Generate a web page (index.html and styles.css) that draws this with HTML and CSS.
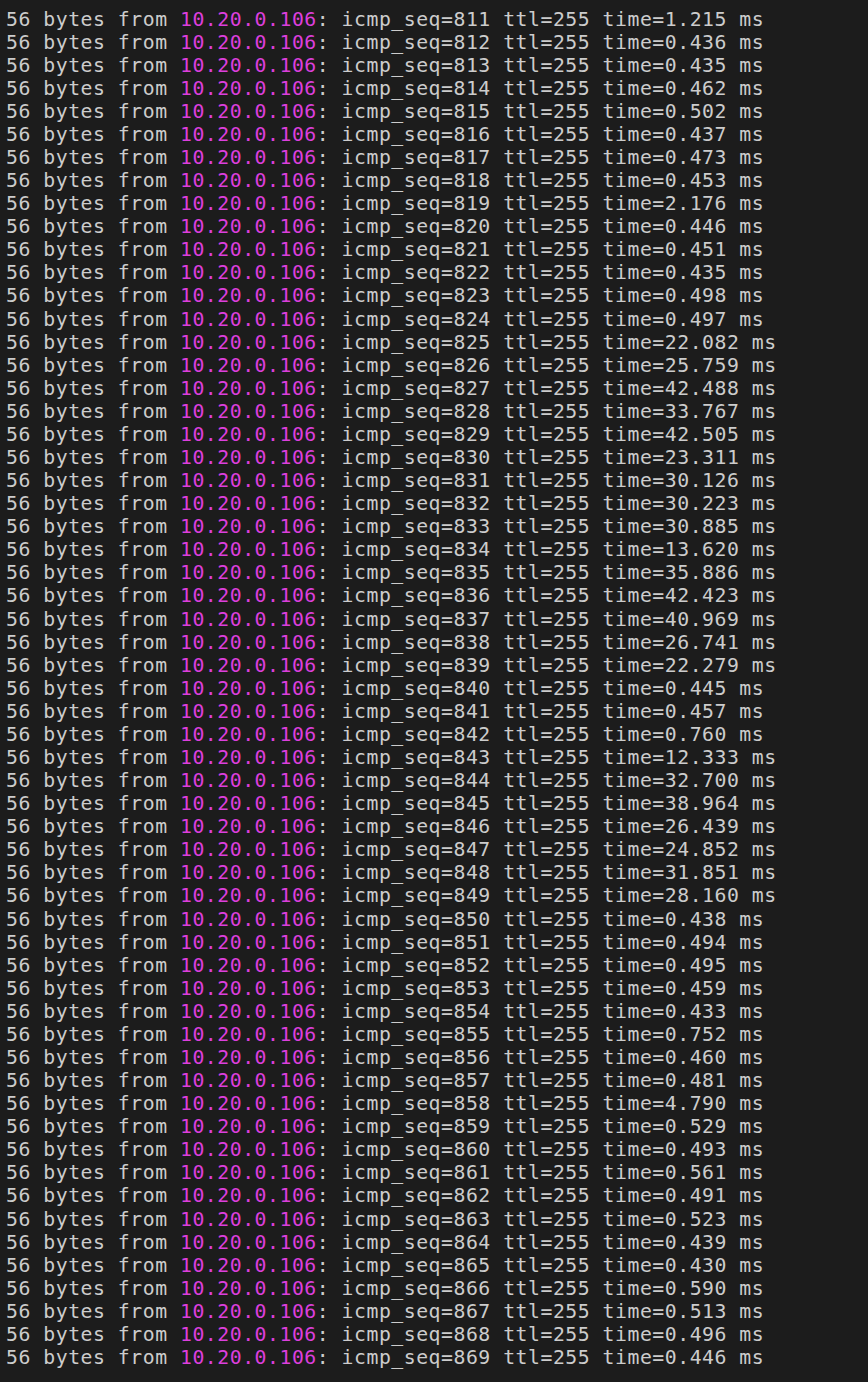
FILE: index.html
```html
<!DOCTYPE html>
<html>
<head>
<meta charset="utf-8">
<link rel="stylesheet" href="styles.css">
</head>
<body>
<div class="term">
<div class="line">56 bytes from <span class="ip">10.20.0.106</span>: icmp_seq=811 ttl=255 time=1.215 ms</div>
<div class="line">56 bytes from <span class="ip">10.20.0.106</span>: icmp_seq=812 ttl=255 time=0.436 ms</div>
<div class="line">56 bytes from <span class="ip">10.20.0.106</span>: icmp_seq=813 ttl=255 time=0.435 ms</div>
<div class="line">56 bytes from <span class="ip">10.20.0.106</span>: icmp_seq=814 ttl=255 time=0.462 ms</div>
<div class="line">56 bytes from <span class="ip">10.20.0.106</span>: icmp_seq=815 ttl=255 time=0.502 ms</div>
<div class="line">56 bytes from <span class="ip">10.20.0.106</span>: icmp_seq=816 ttl=255 time=0.437 ms</div>
<div class="line">56 bytes from <span class="ip">10.20.0.106</span>: icmp_seq=817 ttl=255 time=0.473 ms</div>
<div class="line">56 bytes from <span class="ip">10.20.0.106</span>: icmp_seq=818 ttl=255 time=0.453 ms</div>
<div class="line">56 bytes from <span class="ip">10.20.0.106</span>: icmp_seq=819 ttl=255 time=2.176 ms</div>
<div class="line">56 bytes from <span class="ip">10.20.0.106</span>: icmp_seq=820 ttl=255 time=0.446 ms</div>
<div class="line">56 bytes from <span class="ip">10.20.0.106</span>: icmp_seq=821 ttl=255 time=0.451 ms</div>
<div class="line">56 bytes from <span class="ip">10.20.0.106</span>: icmp_seq=822 ttl=255 time=0.435 ms</div>
<div class="line">56 bytes from <span class="ip">10.20.0.106</span>: icmp_seq=823 ttl=255 time=0.498 ms</div>
<div class="line">56 bytes from <span class="ip">10.20.0.106</span>: icmp_seq=824 ttl=255 time=0.497 ms</div>
<div class="line">56 bytes from <span class="ip">10.20.0.106</span>: icmp_seq=825 ttl=255 time=22.082 ms</div>
<div class="line">56 bytes from <span class="ip">10.20.0.106</span>: icmp_seq=826 ttl=255 time=25.759 ms</div>
<div class="line">56 bytes from <span class="ip">10.20.0.106</span>: icmp_seq=827 ttl=255 time=42.488 ms</div>
<div class="line">56 bytes from <span class="ip">10.20.0.106</span>: icmp_seq=828 ttl=255 time=33.767 ms</div>
<div class="line">56 bytes from <span class="ip">10.20.0.106</span>: icmp_seq=829 ttl=255 time=42.505 ms</div>
<div class="line">56 bytes from <span class="ip">10.20.0.106</span>: icmp_seq=830 ttl=255 time=23.311 ms</div>
<div class="line">56 bytes from <span class="ip">10.20.0.106</span>: icmp_seq=831 ttl=255 time=30.126 ms</div>
<div class="line">56 bytes from <span class="ip">10.20.0.106</span>: icmp_seq=832 ttl=255 time=30.223 ms</div>
<div class="line">56 bytes from <span class="ip">10.20.0.106</span>: icmp_seq=833 ttl=255 time=30.885 ms</div>
<div class="line">56 bytes from <span class="ip">10.20.0.106</span>: icmp_seq=834 ttl=255 time=13.620 ms</div>
<div class="line">56 bytes from <span class="ip">10.20.0.106</span>: icmp_seq=835 ttl=255 time=35.886 ms</div>
<div class="line">56 bytes from <span class="ip">10.20.0.106</span>: icmp_seq=836 ttl=255 time=42.423 ms</div>
<div class="line">56 bytes from <span class="ip">10.20.0.106</span>: icmp_seq=837 ttl=255 time=40.969 ms</div>
<div class="line">56 bytes from <span class="ip">10.20.0.106</span>: icmp_seq=838 ttl=255 time=26.741 ms</div>
<div class="line">56 bytes from <span class="ip">10.20.0.106</span>: icmp_seq=839 ttl=255 time=22.279 ms</div>
<div class="line">56 bytes from <span class="ip">10.20.0.106</span>: icmp_seq=840 ttl=255 time=0.445 ms</div>
<div class="line">56 bytes from <span class="ip">10.20.0.106</span>: icmp_seq=841 ttl=255 time=0.457 ms</div>
<div class="line">56 bytes from <span class="ip">10.20.0.106</span>: icmp_seq=842 ttl=255 time=0.760 ms</div>
<div class="line">56 bytes from <span class="ip">10.20.0.106</span>: icmp_seq=843 ttl=255 time=12.333 ms</div>
<div class="line">56 bytes from <span class="ip">10.20.0.106</span>: icmp_seq=844 ttl=255 time=32.700 ms</div>
<div class="line">56 bytes from <span class="ip">10.20.0.106</span>: icmp_seq=845 ttl=255 time=38.964 ms</div>
<div class="line">56 bytes from <span class="ip">10.20.0.106</span>: icmp_seq=846 ttl=255 time=26.439 ms</div>
<div class="line">56 bytes from <span class="ip">10.20.0.106</span>: icmp_seq=847 ttl=255 time=24.852 ms</div>
<div class="line">56 bytes from <span class="ip">10.20.0.106</span>: icmp_seq=848 ttl=255 time=31.851 ms</div>
<div class="line">56 bytes from <span class="ip">10.20.0.106</span>: icmp_seq=849 ttl=255 time=28.160 ms</div>
<div class="line">56 bytes from <span class="ip">10.20.0.106</span>: icmp_seq=850 ttl=255 time=0.438 ms</div>
<div class="line">56 bytes from <span class="ip">10.20.0.106</span>: icmp_seq=851 ttl=255 time=0.494 ms</div>
<div class="line">56 bytes from <span class="ip">10.20.0.106</span>: icmp_seq=852 ttl=255 time=0.495 ms</div>
<div class="line">56 bytes from <span class="ip">10.20.0.106</span>: icmp_seq=853 ttl=255 time=0.459 ms</div>
<div class="line">56 bytes from <span class="ip">10.20.0.106</span>: icmp_seq=854 ttl=255 time=0.433 ms</div>
<div class="line">56 bytes from <span class="ip">10.20.0.106</span>: icmp_seq=855 ttl=255 time=0.752 ms</div>
<div class="line">56 bytes from <span class="ip">10.20.0.106</span>: icmp_seq=856 ttl=255 time=0.460 ms</div>
<div class="line">56 bytes from <span class="ip">10.20.0.106</span>: icmp_seq=857 ttl=255 time=0.481 ms</div>
<div class="line">56 bytes from <span class="ip">10.20.0.106</span>: icmp_seq=858 ttl=255 time=4.790 ms</div>
<div class="line">56 bytes from <span class="ip">10.20.0.106</span>: icmp_seq=859 ttl=255 time=0.529 ms</div>
<div class="line">56 bytes from <span class="ip">10.20.0.106</span>: icmp_seq=860 ttl=255 time=0.493 ms</div>
<div class="line">56 bytes from <span class="ip">10.20.0.106</span>: icmp_seq=861 ttl=255 time=0.561 ms</div>
<div class="line">56 bytes from <span class="ip">10.20.0.106</span>: icmp_seq=862 ttl=255 time=0.491 ms</div>
<div class="line">56 bytes from <span class="ip">10.20.0.106</span>: icmp_seq=863 ttl=255 time=0.523 ms</div>
<div class="line">56 bytes from <span class="ip">10.20.0.106</span>: icmp_seq=864 ttl=255 time=0.439 ms</div>
<div class="line">56 bytes from <span class="ip">10.20.0.106</span>: icmp_seq=865 ttl=255 time=0.430 ms</div>
<div class="line">56 bytes from <span class="ip">10.20.0.106</span>: icmp_seq=866 ttl=255 time=0.590 ms</div>
<div class="line">56 bytes from <span class="ip">10.20.0.106</span>: icmp_seq=867 ttl=255 time=0.513 ms</div>
<div class="line">56 bytes from <span class="ip">10.20.0.106</span>: icmp_seq=868 ttl=255 time=0.496 ms</div>
<div class="line">56 bytes from <span class="ip">10.20.0.106</span>: icmp_seq=869 ttl=255 time=0.446 ms</div>
</div>
</body>
</html>
```

FILE: styles.css
```css
html, body {
  margin: 0;
  padding: 0;
  background: #1c1c1c;
  height: 100%;
}
.term {
  display: flex;
  flex-direction: column;
  padding: 7.5px 0 0 6px;
  font-family: "DejaVu Sans Mono", "Liberation Mono", monospace;
  font-size: 19.8px;
  letter-spacing: 0.52px;
  line-height: 23.09px;
  color: #cccccc;
}
.line {
  height: 23.09px;
  white-space: pre;
}
.ip {
  color: #dc3fdc;
}
```
